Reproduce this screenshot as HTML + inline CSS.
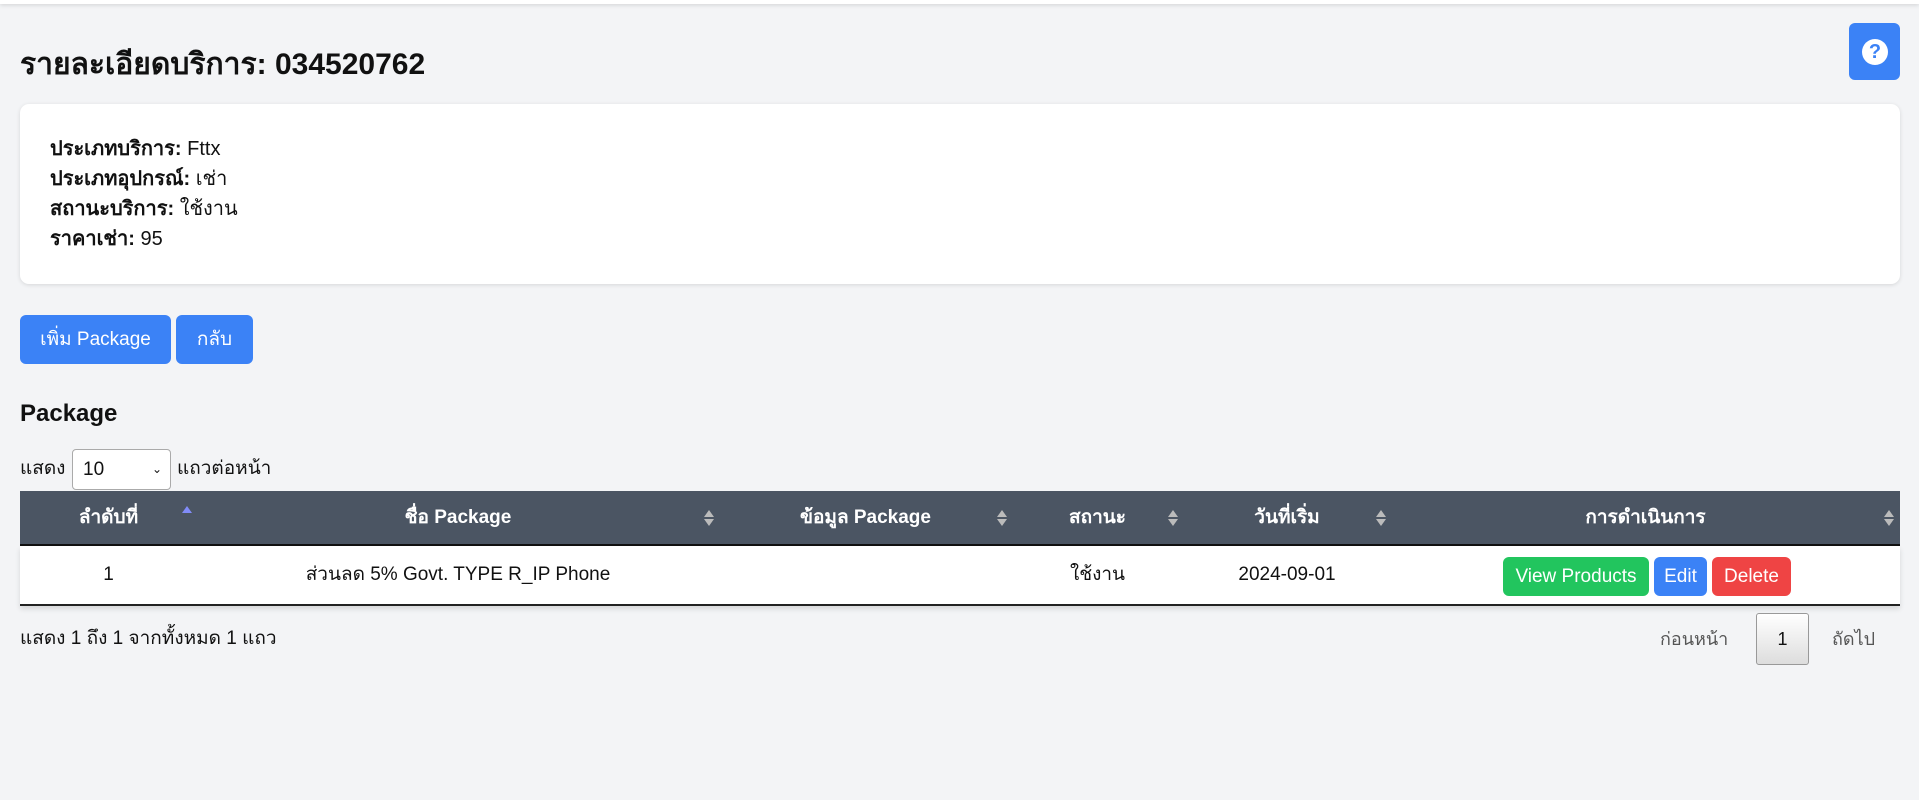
<!DOCTYPE html>
<html><head><meta charset="utf-8"><style>
*{box-sizing:border-box;margin:0;padding:0}
body{width:1919px;height:800px;background:#f3f4f6;font-family:"Liberation Sans",sans-serif;color:#111;position:relative;overflow:hidden;font-size:18px}
.topbar{position:absolute;left:0;top:0;width:1919px;height:4px;background:#fff;box-shadow:0 1px 4px rgba(0,0,0,.15)}
.abs{position:absolute}
h1{position:absolute;left:20px;top:47px;font-size:30px;font-weight:bold;line-height:36px}
.help{left:1849px;top:23px;width:51px;height:57px;background:#3b82f6;border-radius:6px}
.help span{position:absolute;left:13px;top:16px;width:26px;height:26px;border-radius:50%;background:#fff;color:#3b82f6;font-weight:bold;font-size:20px;text-align:center;line-height:26px}
.card{left:20px;top:104px;width:1880px;height:180px;background:#fff;border-radius:9px;box-shadow:0 1px 4px rgba(0,0,0,.12)}
.line{position:absolute;left:30px;font-size:20px;line-height:24px}
.btn{position:absolute;background:#3b82f6;color:#fff;border-radius:6px;text-align:center;font-size:19px}
h2{position:absolute;left:20px;top:399px;font-size:24px;font-weight:bold;line-height:30px}
.sel{left:72px;top:449px;width:99px;height:41px;border:1px solid #aaa;border-radius:4px;background:#fff;font-size:19px;line-height:39px;padding-left:10px}
.thead{left:20px;top:491px;width:1880px;height:55px;background:#4b5563;border-bottom:2px solid #111}
.th{position:absolute;top:0;height:53px;line-height:53px;color:#fff;font-weight:bold;text-align:center;font-size:19px}
.arr{position:absolute;top:17px;width:10px;height:20px}
.row{left:20px;top:546px;width:1880px;height:60px;background:#fff;border-bottom:2px solid #222;box-shadow:0 3px 5px rgba(0,0,0,.12)}
.td{position:absolute;top:0;height:58px;line-height:58px;text-align:center;font-size:19px}
.b{position:absolute;top:11px;height:39px;line-height:39px;color:#fff;border-radius:6px;text-align:center;font-size:19px}
</style></head><body>
<div class="topbar"></div>
<h1>รายละเอียดบริการ: 034520762</h1>
<div class="abs help"><span>?</span></div>
<div class="abs card">
<div class="line" style="top:33px"><b>ประเภทบริการ:</b> Fttx</div>
<div class="line" style="top:63px"><b>ประเภทอุปกรณ์:</b> เช่า</div>
<div class="line" style="top:93px"><b>สถานะบริการ:</b> ใช้งาน</div>
<div class="line" style="top:123px"><b>ราคาเช่า:</b> 95</div>
</div>
<div class="btn" style="left:20px;top:315px;width:151px;height:49px;line-height:49px">เพิ่ม Package</div>
<div class="btn" style="left:176px;top:315px;width:77px;height:49px;line-height:49px">กลับ</div>
<h2>Package</h2>
<div class="abs" style="left:20px;top:457px;line-height:24px;font-size:19px">แสดง</div>
<div class="abs sel">10<span style="position:absolute;right:8px;top:0;font-size:12px">&#8964;</span></div>
<div class="abs" style="left:177px;top:457px;line-height:24px;font-size:19px">แถวต่อหน้า</div>
<div class="abs thead">
<div class="th" style="left:0;width:177px">ลำดับที่</div>
<div class="th" style="left:177px;width:522px">ชื่อ Package</div>
<div class="th" style="left:699px;width:293px">ข้อมูล Package</div>
<div class="th" style="left:992px;width:171px">สถานะ</div>
<div class="th" style="left:1163px;width:208px">วันที่เริ่ม</div>
<div class="th" style="left:1371px;width:509px">การดำเนินการ</div>
<svg class="arr" style="left:162px;top:14px" viewBox="0 0 10 20"><path d="M0 8L5 1L10 8Z" fill="#818cf8"/></svg>
<svg class="arr" style="left:684px" viewBox="0 0 10 20"><path d="M0 9L5 2L10 9Z M0 11L5 18L10 11Z" fill="#bbb"/></svg>
<svg class="arr" style="left:977px" viewBox="0 0 10 20"><path d="M0 9L5 2L10 9Z M0 11L5 18L10 11Z" fill="#bbb"/></svg>
<svg class="arr" style="left:1148px" viewBox="0 0 10 20"><path d="M0 9L5 2L10 9Z M0 11L5 18L10 11Z" fill="#bbb"/></svg>
<svg class="arr" style="left:1356px" viewBox="0 0 10 20"><path d="M0 9L5 2L10 9Z M0 11L5 18L10 11Z" fill="#bbb"/></svg>
<svg class="arr" style="left:1864px" viewBox="0 0 10 20"><path d="M0 9L5 2L10 9Z M0 11L5 18L10 11Z" fill="#bbb"/></svg>
</div>
<div class="abs row">
<div class="td" style="left:0;width:177px">1</div>
<div class="td" style="left:177px;width:522px">ส่วนลด 5% Govt. TYPE R_IP Phone</div>
<div class="td" style="left:992px;width:171px">ใช้งาน</div>
<div class="td" style="left:1163px;width:208px">2024-09-01</div>
<div class="b" style="left:1483px;width:146px;background:#22c55e">View Products</div>
<div class="b" style="left:1634px;width:53px;background:#3b82f6">Edit</div>
<div class="b" style="left:1692px;width:79px;background:#ef4444">Delete</div>
</div>
<div class="abs" style="left:20px;top:627px;line-height:24px;font-size:19px">แสดง 1 ถึง 1 จากทั้งหมด 1 แถว</div>
<div class="abs" style="left:1660px;top:627px;line-height:24px;color:#555">ก่อนหน้า</div>
<div class="abs" style="left:1756px;top:613px;width:53px;height:52px;border:1px solid #999;border-radius:3px;background:linear-gradient(#fff,#ddd);text-align:center;line-height:50px">1</div>
<div class="abs" style="left:1832px;top:627px;line-height:24px;color:#555">ถัดไป</div>
</body></html>
